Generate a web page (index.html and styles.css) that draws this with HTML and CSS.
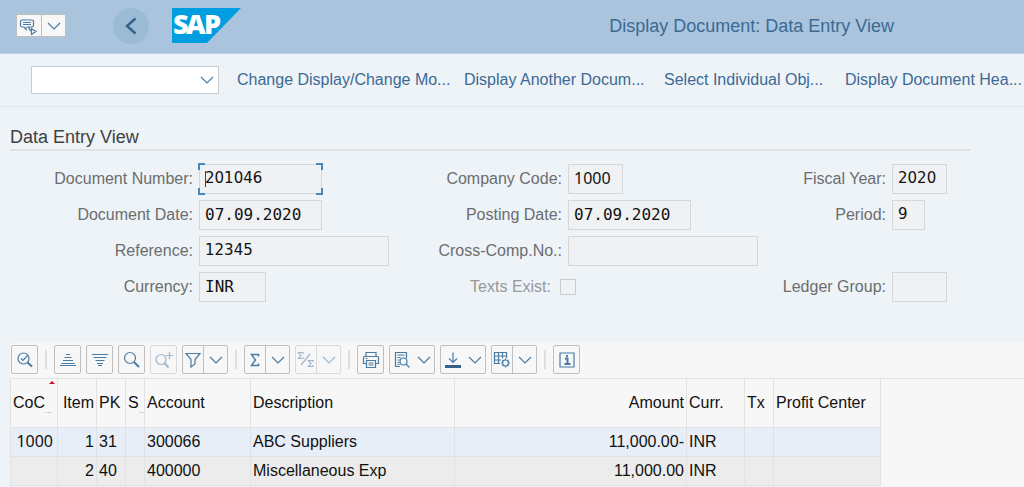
FILE: index.html
```html
<!DOCTYPE html>
<html lang="en">
<head>
<meta charset="utf-8">
<title>Display Document: Data Entry View</title>
<link rel="stylesheet" href="styles.css">
</head>
<body>
<svg class="defs" aria-hidden="true">
  <symbol id="chevron" viewBox="0 0 14 8"><path d="M1 1l6 6 6-6"/></symbol>
</svg>

<header class="shell">
  <div class="split menu">
    <button type="button" aria-label="Menu">
      <svg width="20" height="20" viewBox="0 0 20 20"><path d="M3 4h10q1.500 0 1.500 1.500v4q0 1.500-1.500 1.500H9l2 2.500M3 4Q1.500 4 1.500 5.500v4Q1.500 11 3 11h2l2 2.500V11M4 6.500h8M4 8.500h8M12.500 12.500v6l4.500-3zM10 13l2 2"/></svg>
    </button>
    <button type="button" aria-label="Menu options"><svg class="chev"><use href="#chevron"/></svg></button>
  </div>
  <button type="button" class="back" aria-label="Back">
    <svg width="12" height="18" viewBox="0 0 12 18"><path d="M10.500 1.500L2 9l8.500 7.500"/></svg>
  </button>
  <svg class="logo" width="70" height="35" viewBox="0 0 70 35" role="img" aria-label="SAP">
    <path d="M0 0h69L35 35H0z"/>
    <text x="1 14 32" y="26">SAP</text>
  </svg>
  <h1>Display Document: Data Entry View</h1>
</header>

<nav class="toolbar">
  <div class="command">
    <select aria-label="Command"><option></option></select>
    <svg class="chev"><use href="#chevron"/></svg>
  </div>
  <div class="actions">
    <button type="button">Change Display/Change Mo...</button>
    <button type="button">Display Another Docum...</button>
    <button type="button">Select Individual Obj...</button>
    <button type="button">Display Document Hea...</button>
  </div>
</nav>

<main>
  <section class="entry">
    <h2>Data Entry View</h2>
    <form class="groups">
      <div class="group">
        <label for="docno">Document Number:</label>
        <div class="focus"><input id="docno" class="w-m num" value="201046" readonly></div>
        <label for="docdate">Document Date:</label>
        <input id="docdate" class="w-m" value="07.09.2020" readonly>
        <label for="ref">Reference:</label>
        <input id="ref" class="w-l num" value="12345" readonly>
        <label for="cur">Currency:</label>
        <input id="cur" class="w-c" value="INR" readonly>
      </div>
      <div class="group">
        <label for="coco">Company Code:</label>
        <input id="coco" class="w-s compact" value="1000" readonly>
        <label for="posting">Posting Date:</label>
        <input id="posting" class="w-m" value="07.09.2020" readonly>
        <label for="cross">Cross-Comp.No.:</label>
        <input id="cross" class="w-l" readonly>
        <div class="check">
          <label for="texts">Texts Exist:</label>
          <input id="texts" type="checkbox" disabled>
        </div>
      </div>
      <div class="group narrow">
        <label for="year">Fiscal Year:</label>
        <input id="year" class="w-s num" value="2020" readonly>
        <label for="period">Period:</label>
        <input id="period" class="w-xs num" value="9" readonly>
        <label for="ledger" class="last">Ledger Group:</label>
        <input id="ledger" class="w-s last" readonly>
      </div>
    </form>
  </section>

  <section class="items">
    <div class="tools">
      <button type="button" class="tool" aria-label="Details"><svg width="18" height="18" viewBox="0 0 18 18"><circle cx="7.500" cy="7.500" r="5.500"/><path d="M5 7.500l2 2 4.500-5"/><path class="thick" d="M11.500 11.500l4.500 4"/></svg></button>
      <i class="sep"></i>
      <button type="button" class="tool" aria-label="Sort ascending"><svg width="18" height="18" viewBox="0 0 18 18"><path d="M7 3.500h4M5.500 6.500h7M4 9.500h10M2.500 12.500h13M1 14.500h16"/></svg></button>
      <button type="button" class="tool" aria-label="Sort descending"><svg width="18" height="18" viewBox="0 0 18 18"><path d="M1 3.500h16M2.500 6.500h13M4.500 9.500h9M6 12.500h6M7 14.500h4"/></svg></button>
      <button type="button" class="tool" aria-label="Find"><svg width="18" height="18" viewBox="0 0 18 18"><circle cx="7" cy="7" r="5.500"/><path class="thick" d="M11 11l5 5"/></svg></button>
      <button type="button" class="tool off" aria-label="Find next"><svg width="20" height="18" viewBox="0 0 20 18"><circle cx="7" cy="8.500" r="5"/><path class="thick" d="M10.500 12l4 4.500"/><path d="M15.500 1v7M12 4.500h7"/></svg></button>
      <div class="split">
        <button type="button" aria-label="Filter"><svg width="18" height="18" viewBox="0 0 18 18"><path d="M2 2.500h14l-5 6V13l-4 3V8.500z"/></svg></button>
        <button type="button" aria-label="Filter options"><svg class="chev"><use href="#chevron"/></svg></button>
      </div>
      <i class="sep"></i>
      <div class="split">
        <button type="button" aria-label="Total"><svg width="18" height="18" viewBox="0 0 18 18"><path class="medium" d="M12.500 5.500v-2H5.500L9.500 9l-4 5.500h7v-2"/></svg></button>
        <button type="button" aria-label="Total options"><svg class="chev"><use href="#chevron"/></svg></button>
      </div>
      <div class="split off">
        <button type="button" aria-label="Subtotal"><svg width="18" height="18" viewBox="0 0 18 18"><path d="M6 3V1.500H1.500L4 4.500l-2.500 3H6V6M16 11V9.500h-4.500l2.500 3-2.500 3H16V14M13 3L4 14"/></svg></button>
        <button type="button" aria-label="Subtotal options"><svg class="chev"><use href="#chevron"/></svg></button>
      </div>
      <i class="sep"></i>
      <button type="button" class="tool" aria-label="Print"><svg width="18" height="18" viewBox="0 0 18 18"><path d="M4 5V1.500h10V5M4 12.500H1.500v-6q0-1 1-1h13q1 0 1 1v6H14M4.500 9.500h9v7h-9zM6.500 12h5M6.500 14h5M3.500 7.500h2"/></svg></button>
      <button type="button" class="tool wide" aria-label="Views"><svg width="18" height="18" viewBox="0 0 18 18"><path d="M7 15.500H2.500v-14h11V7M4.500 4h7M4.500 6.500h3M4.500 9h2M4.500 11.500h2M4.500 13.500h2M13 13l3.500 3.500"/><circle cx="10.500" cy="10.500" r="3.500"/></svg><svg class="chev"><use href="#chevron"/></svg></button>
      <button type="button" class="tool wide" aria-label="Export"><svg width="18" height="18" viewBox="0 0 18 18"><path d="M9 1.500V11M5 7.500l4 4 4-4"/><path class="bar" d="M1 15.500h16"/></svg><svg class="chev"><use href="#chevron"/></svg></button>
      <div class="split">
        <button type="button" aria-label="Layout"><svg width="18" height="18" viewBox="0 0 18 18"><path d="M7 12.500H1.500v-11h12V7M1.500 5h12M1.500 9H8M5.500 1.500v11M9.500 1.500V7"/><circle cx="12.500" cy="12" r="3"/><path d="M12.500 7.500V9M12.500 15v1.500M8 12h1.500M15.500 12H17M9.500 9l1 1M14.500 14l1 1M15.500 9l-1 1M10.500 14l-1 1"/></svg></button>
        <button type="button" aria-label="Layout options"><svg class="chev"><use href="#chevron"/></svg></button>
      </div>
      <i class="sep"></i>
      <button type="button" class="tool" aria-label="Information"><svg width="18" height="18" viewBox="0 0 18 18"><path d="M2 2h14v14H2z"/><path class="thick" d="M7 7.500h2.500V13M6.500 13h6M9 4v2"/></svg></button>
    </div>

    <div class="grid">
      <table>
        <colgroup><col class="c-coc"><col class="c-item"><col class="c-pk"><col class="c-s"><col class="c-acc"><col class="c-desc"><col class="c-amt"><col class="c-curr"><col class="c-pk"><col class="c-profit"></colgroup>
        <thead>
          <tr>
            <th class="sorted">CoC<span class="dots">...</span></th><th class="right">Item</th><th>PK</th><th class="tight">S<span class="dots">...</span></th><th>Account</th><th>Description</th><th class="right">Amount</th><th>Curr.</th><th>Tx</th><th>Profit Center</th>
          </tr>
        </thead>
        <tbody>
          <tr class="selected"><td class="code">1000</td><td class="right">1</td><td>31</td><td></td><td>300066</td><td>ABC Suppliers</td><td class="right">11,000.00-</td><td>INR</td><td></td><td></td></tr>
          <tr><td></td><td class="right">2</td><td>40</td><td></td><td>400000</td><td>Miscellaneous Exp</td><td class="right">11,000.00</td><td>INR</td><td></td><td></td></tr>
        </tbody>
      </table>
    </div>
  </section>
</main>
</body>
</html>
```
FILE: styles.css
```css
* { box-sizing: border-box; }

body {
  margin: 0;
  background: #eef3f8;
  color: #111;
  font: 16px/20px "Liberation Sans", Arial, sans-serif;
}

button, input, select { font: inherit; color: inherit; margin: 0; }

button {
  display: flex;
  align-items: center;
  justify-content: center;
  padding: 0;
  border: 0;
  background: none;
}

svg { flex: none; fill: none; stroke: #4a7ba5; stroke-width: 1.2; }
.defs { display: none; }
.chev { width: 14px; height: 8px; overflow: visible; }
.medium { stroke-width: 1.5; }
.thick { stroke-width: 2; }
.bar { stroke-width: 3; stroke: #346187; }

/* Shell header */
.shell {
  display: flex;
  align-items: center;
  height: 54px;
  padding: 0 130px 2px 16px;
  background: #aac4de;
  border-bottom: 1px solid #bdd1e4;
}

.split {
  display: flex;
  width: 46px;
  height: 29px;
  border: 1px solid #bfbfbf;
  border-radius: 2px;
  background: #f7f7f7;
}
.split button { flex: 1; }
.split button:first-child { flex: 0 0 21px; border-right: 1px solid #bfbfbf; }

.menu { width: 50px; height: 23px; border-radius: 0; }
.menu button:first-child { flex-basis: 25px; }

.back {
  width: 36px;
  height: 36px;
  margin-left: 47px;
  border-radius: 50%;
  background: #9bbad4;
}
.back svg { stroke: #346187; stroke-width: 2.4; }

.logo { margin: 0 auto 0 23px; stroke: none; }
.logo path { fill: #009de0; }
.logo text { fill: #fff; font: 800 27px/27px "Open Sans", sans-serif; }

h1 { margin: 0; color: #3b6a94; font-size: 18px; font-weight: 400; white-space: nowrap; }

/* Action toolbar */
.toolbar {
  display: flex;
  align-items: center;
  height: 53px;
  padding-left: 31px;
  border-bottom: 1px solid #dce6f1;
}

.command { position: relative; width: 188px; }
.command select {
  display: block;
  width: 100%;
  height: 28px;
  border: 1px solid #c9cccf;
  border-radius: 0;
  background: #fff;
  appearance: none;
}
.command .chev { position: absolute; right: 5px; top: 10px; pointer-events: none; }

.actions {
  display: grid;
  flex: 1;
  grid-template-columns: 227fr 200fr 181fr 179fr;
  padding-left: 18px;
}
.actions button { justify-content: start; color: #3b6a94; white-space: nowrap; }

/* Document header */
.entry { padding: 20px 54px 41px 10px; }

h2 {
  margin: 0 0 13px;
  padding-bottom: 2px;
  border-bottom: 2px solid #dfe2e4;
  color: #404040;
  font-size: 18px;
  font-weight: 400;
}

.groups { display: grid; grid-template-columns: 379fr 369fr 212fr; }

.group {
  display: grid;
  grid-template-columns: 1fr 190px;
  grid-auto-rows: 30px;
  gap: 6px;
  align-items: center;
}
.group.narrow { grid-template-columns: 1fr 78px; }
.group .last { grid-row: 4; }

.group label { color: #6b6d6f; text-align: right; white-space: nowrap; }

.group input {
  height: 30px;
  padding: 0 5px 2px;
  border: 1px solid #d4d6d8;
  border-radius: 0;
  outline: 0;
  background: #f0f1f3;
  color: #111;
  font-family: "DejaVu Sans Mono", monospace;
}
.group .num { font-family: "DejaVu Sans", sans-serif; font-size: 15px; }
.group .compact { font-family: "Noto Sans", sans-serif; }

.w-xs { width: 33px; }
.w-s { width: 55px; }
.w-c { width: 67px; }
.w-m { width: 123px; }
.w-l { width: 190px; }

.focus { position: relative; width: 123px; }
.focus input { display: block; }
.focus::before {
  content: "";
  position: absolute;
  inset: -1px;
  pointer-events: none;
  --c: linear-gradient(#4a86b8, #4a86b8);
  background:
    var(--c) 0 0 / 7px 2px, var(--c) 0 0 / 2px 7px,
    var(--c) 100% 0 / 7px 2px, var(--c) 100% 0 / 2px 7px,
    var(--c) 0 100% / 7px 2px, var(--c) 0 100% / 2px 7px,
    var(--c) 100% 100% / 7px 2px, var(--c) 100% 100% / 2px 7px;
  background-repeat: no-repeat;
}
.focus::after {
  content: "";
  position: absolute;
  left: 6px;
  top: 7px;
  width: 1px;
  height: 16px;
  background: #444;
}

.check {
  display: flex;
  grid-column: 1 / -1;
  align-items: center;
  justify-content: end;
  gap: 9px;
  padding-right: 182px;
}
.group .check label { color: #96999c; }
.group .check input { width: 16px; height: 16px; padding: 0; border-color: #c8cacc; appearance: none; }

/* Line items */
.items { margin-left: 10px; background: #f7f7f7; }

.tools { display: flex; gap: 5px; padding: 2px 1px 4px; }
.tool { width: 27px; height: 29px; border: 1px solid #bfbfbf; border-radius: 2px; }
.tool.wide { width: 46px; gap: 6px; }
.sep { width: 2px; height: 19px; margin: 5px 2px; background: #dedede; }
.off { opacity: .5; }

.grid { border-top: 1px solid #e4e4e4; }

table { width: 871px; border-collapse: separate; border-spacing: 0; table-layout: fixed; }
.c-coc { width: 48px; }
.c-item { width: 39px; }
.c-pk { width: 29px; }
.c-s { width: 19px; }
.c-acc { width: 106px; }
.c-desc { width: 204px; }
.c-amt { width: 232px; }
.c-curr { width: 58px; }
.c-profit { width: 107px; }

th, td {
  padding: 0 2px;
  border-right: 1px solid #e2e2e2;
  border-bottom: 1px solid #e2e2e2;
  font-weight: 400;
  text-align: left;
  white-space: nowrap;
}
th:first-child, td:first-child { border-left: 1px solid #e2e2e2; }
th { height: 49px; }
td { height: 29px; }
tbody tr { background: #ececec; }
tbody .selected { background: #e7eef7; }
th.right, td.right { text-align: right; }
.tight { overflow: hidden; }
td.code { padding: 0 4px 2px 0; font: 16px/20px "Noto Sans", sans-serif; text-align: right; }
.dots { color: #777; font-size: 8px; line-height: 0; vertical-align: -5px; }

.sorted { position: relative; }
.sorted::after {
  content: "";
  position: absolute;
  top: 2px;
  right: 2px;
  border: 3px solid transparent;
  border-top: 0;
  border-bottom-color: #cc1030;
}
```
